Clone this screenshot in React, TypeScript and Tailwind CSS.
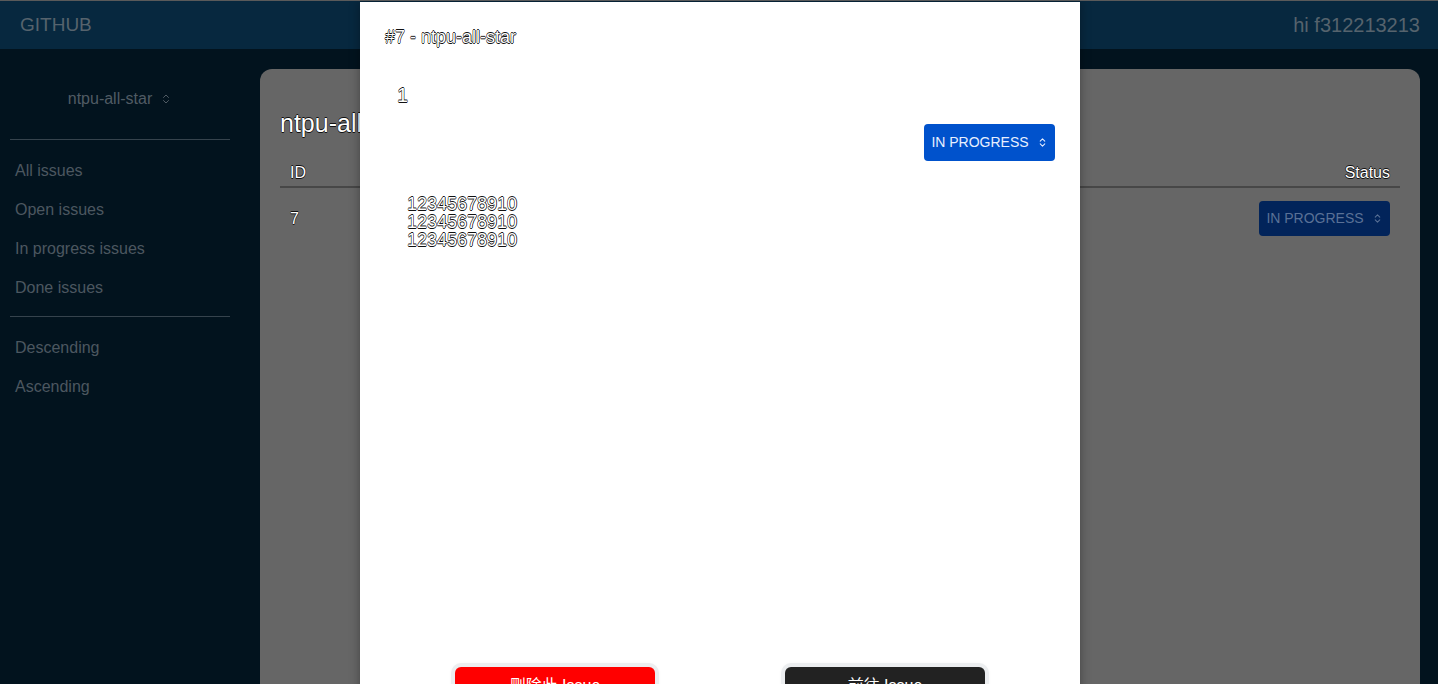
import React from 'react';
import { ChevronsUpDown } from 'lucide-react';

const filters = ['All issues', 'Open issues', 'In progress issues', 'Done issues'];
const sorts = ['Descending', 'Ascending'];

const outline = '[text-shadow:0.6px_0_0_#111,-0.6px_0_0_#111,0_0.6px_0_#111,0_-0.6px_0_#111]';

function StatusButton({ dim }: { dim?: boolean }) {
  return (
    <button
      type="button"
      className={
        dim
          ? 'flex h-[35px] w-[131px] items-center justify-center gap-2 rounded-[4px] bg-[#02245a] text-[14px] text-[#5a7196]'
          : 'flex h-[37px] w-[131px] items-center justify-center gap-2 rounded-[4px] bg-[#0052cc] text-[14px] text-[#e8f0ff]'
      }
    >
      IN PROGRESS
      <ChevronsUpDown size={11} strokeWidth={2.2} />
    </button>
  );
}

export default function App() {
  return (
    <div className="relative h-[684px] w-full overflow-hidden border-t border-[#5a5a5a] bg-[#02131e] font-['Liberation_Sans','Noto_Sans_CJK_TC',sans-serif]">
      <header className="flex h-[48px] items-center justify-between bg-[#07283f] px-5 text-[20px] text-[#56636d]">
        <span className="text-[19px]">GITHUB</span>
        <span className="mr-[-2px]">hi f312213213</span>
      </header>

      <div className="flex">
        <aside className="w-[260px] shrink-0 px-[10px]">
          <div className="flex h-[90px] items-center justify-center gap-2 pr-[20px] pt-[10px] text-[16px] text-[#505b64]">
            ntpu-all-star
            <ChevronsUpDown size={12} strokeWidth={2} />
          </div>
          <div className="h-px w-[220px] bg-[#36434d]" />
          <nav className="flex flex-col pb-[9px] pt-[11px]">
            {filters.map((f) => (
              <a key={f} className="flex h-[39px] items-center px-[5px] text-[16px] text-[#4c5760]">
                {f}
              </a>
            ))}
          </nav>
          <div className="h-px w-[220px] bg-[#36434d]" />
          <nav className="flex flex-col py-[11px]">
            {sorts.map((s) => (
              <a key={s} className="flex h-[39px] items-center px-[5px] text-[16px] text-[#4c5760]">
                {s}
              </a>
            ))}
          </nav>
        </aside>

        <main className="mt-[20px] h-[700px] w-[1160px] rounded-xl bg-[#666666] px-[20px] pt-[36px]">
          <h1 className={`text-[25px] text-white ${outline}`}>ntpu-all-star</h1>
          <div className="mt-[18px] flex h-[27px] items-center justify-between border-b-2 border-[#474747] px-[10px] text-[16px] text-white">
            <span className={outline}>ID</span>
            <span className={outline}>Status</span>
          </div>
          <div className="flex h-[62px] items-center justify-between px-[10px] text-[16px] text-white">
            <span className={outline}>7</span>
            <StatusButton dim />
          </div>
        </main>
      </div>

      {/* issue modal */}
      <div className="absolute left-[360px] top-px flex h-[720px] w-[720px] flex-col bg-white px-[25px] pt-[22px] shadow-[0_0_10px_rgba(0,0,0,0.35)]">
        <h2 className={`text-[18px] leading-[27px] text-white ${outline}`}>#7 - ntpu-all-star</h2>
        <div className={`ml-[12px] mt-[29px] text-[20px] leading-[30px] text-white ${outline}`}>1</div>
        <div className="mt-[14px] flex justify-end">
          <StatusButton />
        </div>
        <div className={`ml-[22px] mt-[34px] text-[18px] leading-[18px] text-white ${outline}`}>
          <p>12345678910</p>
          <p>12345678910</p>
          <p>12345678910</p>
        </div>
        <div className="mt-[418px] flex justify-center gap-[130px]">
          <button
            type="button"
            className="h-[40px] w-[200px] rounded-md bg-[#ff0000] pb-[3px] text-[16px] text-white ring-4 ring-[#eceef0] shadow-[0_0_6px_rgba(0,0,0,0.15)]"
          >
            刪除此 Issue
          </button>
          <button
            type="button"
            className="h-[40px] w-[200px] rounded-md bg-[#222222] pb-[3px] text-[16px] text-white ring-4 ring-[#eceef0] shadow-[0_0_6px_rgba(0,0,0,0.15)]"
          >
            前往 Issue
          </button>
        </div>
      </div>
    </div>
  );
}
